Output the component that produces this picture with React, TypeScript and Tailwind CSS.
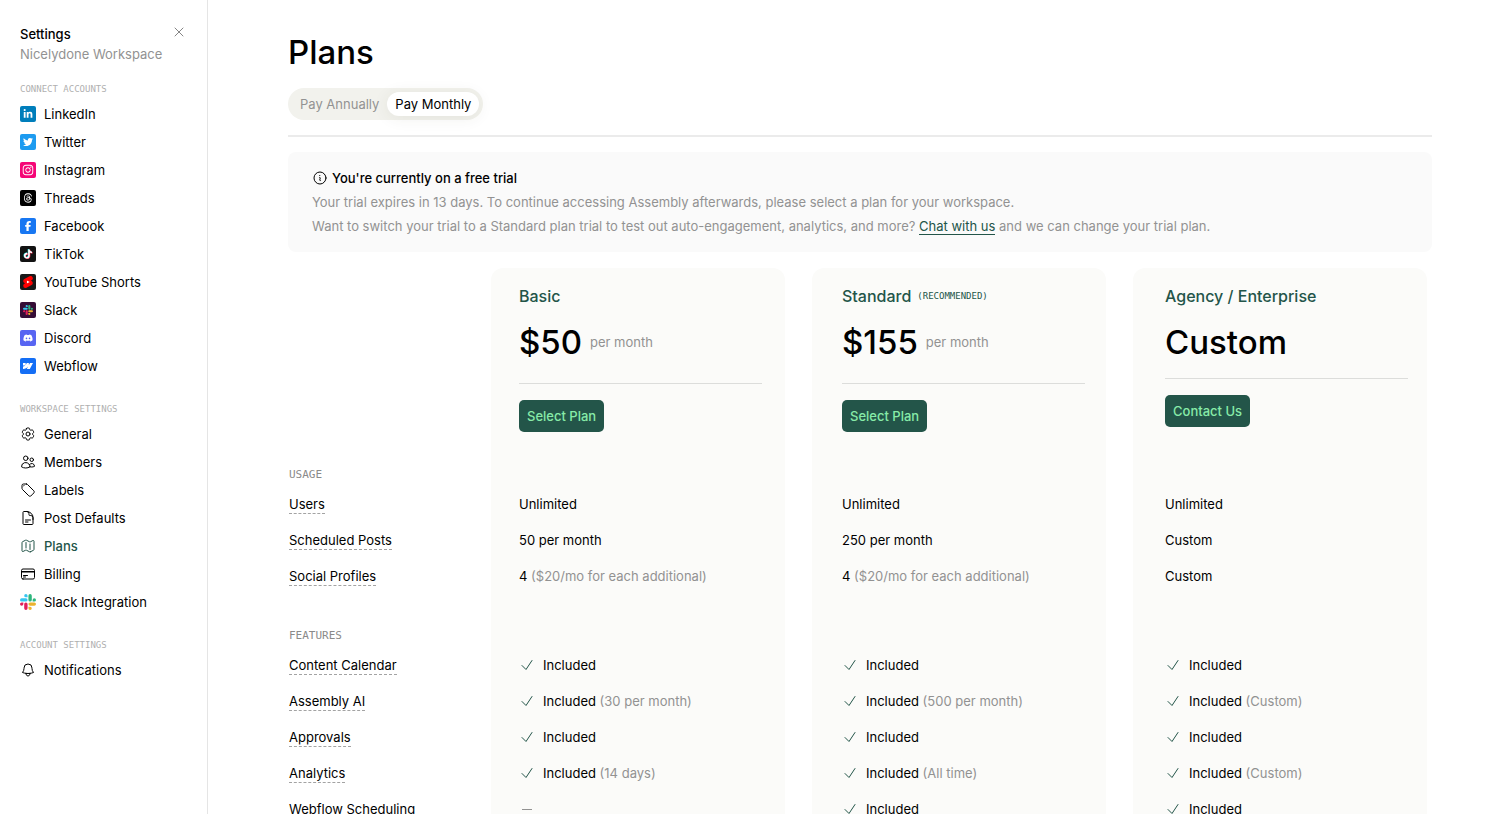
import { useState, type ReactNode } from "react";
import clsx from "clsx";
import {
  FaDiscord,
  FaFacebookF,
  FaInstagram,
  FaLinkedinIn,
  FaThreads,
  FaTwitter,
} from "react-icons/fa6";
import { SiWebflow } from "react-icons/si";
import {
  HiOutlineBell,
  HiOutlineCheck,
  HiOutlineCog6Tooth,
  HiOutlineCreditCard,
  HiOutlineDocumentText,
  HiOutlineInformationCircle,
  HiOutlineMap,
  HiOutlineTag,
  HiOutlineUsers,
  HiOutlineXMark,
} from "react-icons/hi2";

const SlackLogo = ({ className }: { className: string }) => (
  <svg viewBox="0 0 24 24" className={className}>
    <path
      fill="#E01E5A"
      d="M5.042 15.165a2.528 2.528 0 0 1-2.52 2.523A2.528 2.528 0 0 1 0 15.165a2.527 2.527 0 0 1 2.522-2.52h2.52v2.52zM6.313 15.165a2.527 2.527 0 0 1 2.521-2.52 2.527 2.527 0 0 1 2.521 2.52v6.313A2.528 2.528 0 0 1 8.834 24a2.528 2.528 0 0 1-2.521-2.522v-6.313z"
    />
    <path
      fill="#36C5F0"
      d="M8.834 5.042a2.528 2.528 0 0 1-2.521-2.52A2.528 2.528 0 0 1 8.834 0a2.528 2.528 0 0 1 2.521 2.522v2.52H8.834zM8.834 6.313a2.528 2.528 0 0 1 2.521 2.521 2.528 2.528 0 0 1-2.521 2.521H2.522A2.528 2.528 0 0 1 0 8.834a2.528 2.528 0 0 1 2.522-2.521h6.312z"
    />
    <path
      fill="#2EB67D"
      d="M18.956 8.834a2.528 2.528 0 0 1 2.522-2.521A2.528 2.528 0 0 1 24 8.834a2.528 2.528 0 0 1-2.522 2.521h-2.522V8.834zM17.688 8.834a2.528 2.528 0 0 1-2.523 2.521 2.527 2.527 0 0 1-2.52-2.521V2.522A2.527 2.527 0 0 1 15.165 0a2.528 2.528 0 0 1 2.523 2.522v6.312z"
    />
    <path
      fill="#ECB22E"
      d="M15.165 18.956a2.528 2.528 0 0 1 2.523 2.522A2.528 2.528 0 0 1 15.165 24a2.527 2.527 0 0 1-2.52-2.522v-2.522h2.52zM15.165 17.688a2.527 2.527 0 0 1-2.52-2.523 2.526 2.526 0 0 1 2.52-2.52h6.313A2.527 2.527 0 0 1 24 15.165a2.528 2.528 0 0 1-2.522 2.523h-6.313z"
    />
  </svg>
);

const TIKTOK_NOTE =
  "M12.525.02c1.31-.02 2.61-.01 3.91-.02.08 1.53.63 3.09 1.75 4.17 1.12 1.11 2.7 1.62 4.24 1.79v4.03c-1.44-.05-2.89-.35-4.2-.97-.57-.26-1.1-.59-1.62-.93-.01 2.92.01 5.84-.02 8.75-.08 1.4-.54 2.79-1.35 3.94-1.31 1.92-3.58 3.17-5.91 3.21-1.43.08-2.86-.31-4.08-1.03-2.02-1.19-3.44-3.37-3.65-5.71-.02-.5-.03-1-.01-1.49.18-1.9 1.12-3.72 2.58-4.96 1.66-1.44 3.98-2.13 6.15-1.72.02 1.48-.04 2.96-.04 4.44-.99-.32-2.15-.23-3.02.37-.63.41-1.11 1.04-1.36 1.75-.21.51-.15 1.07-.14 1.61.24 1.64 1.82 3.02 3.5 2.87 1.12-.01 2.19-.66 2.77-1.61.19-.33.4-.67.41-1.06.1-1.79.06-3.57.07-5.36.01-4.03-.01-8.05.02-12.07z";

const TikTokLogo = () => (
  <svg viewBox="-1 -1 26 26" className="size-2.5">
    <path fill="#25F4EE" d={TIKTOK_NOTE} transform="translate(-1.2 -1)" />
    <path fill="#FE2C55" d={TIKTOK_NOTE} transform="translate(1.4 1)" />
    <path fill="#fff" d={TIKTOK_NOTE} />
  </svg>
);

const ShortsLogo = () => (
  <svg viewBox="0 0 24 24" className="size-3">
    <path fill="#fff" d="M9 8h7v8H9z" />
    <path
      fill="#FF0000"
      d="m18.931 9.99-1.441-.601 1.717-.913a4.48 4.48 0 0 0 1.874-6.078 4.506 4.506 0 0 0-6.09-1.874L4.792 5.929a4.504 4.504 0 0 0-2.402 4.193 4.521 4.521 0 0 0 2.666 3.904c.036.012 1.442.6 1.442.6l-1.706.901a4.51 4.51 0 0 0-2.369 3.967A4.528 4.528 0 0 0 6.93 24c.725 0 1.437-.174 2.08-.508l10.21-5.406a4.494 4.494 0 0 0 2.39-4.192 4.525 4.525 0 0 0-2.678-3.904ZM9.597 15.19V8.824l6.007 3.184z"
    />
  </svg>
);

const Badge = ({ color, children }: { color: string; children: ReactNode }) => (
  <span
    className={clsx(
      "flex size-4 shrink-0 items-center justify-center rounded-xs text-white",
      color
    )}
  >
    {children}
  </span>
);

type NavItem = { label: string; icon: ReactNode; active?: boolean };

const navGroups: { title: string; items: NavItem[] }[] = [
  {
    title: "CONNECT ACCOUNTS",
    items: [
      {
        label: "LinkedIn",
        icon: (
          <Badge color="bg-[#007ebb]">
            <FaLinkedinIn className="size-2.5" />
          </Badge>
        ),
      },
      {
        label: "Twitter",
        icon: (
          <Badge color="bg-[#1d9bf0]">
            <FaTwitter className="size-2.5" />
          </Badge>
        ),
      },
      {
        label: "Instagram",
        icon: (
          <Badge color="bg-[#f50676]">
            <FaInstagram className="size-3" />
          </Badge>
        ),
      },
      {
        label: "Threads",
        icon: (
          <Badge color="bg-black">
            <FaThreads className="size-2.5" />
          </Badge>
        ),
      },
      {
        label: "Facebook",
        icon: (
          <Badge color="bg-[#1877f2]">
            <FaFacebookF className="size-2.5" />
          </Badge>
        ),
      },
      {
        label: "TikTok",
        icon: (
          <Badge color="bg-[#121212]">
            <TikTokLogo />
          </Badge>
        ),
      },
      {
        label: "YouTube Shorts",
        icon: (
          <Badge color="bg-[#181818]">
            <ShortsLogo />
          </Badge>
        ),
      },
      {
        label: "Slack",
        icon: (
          <Badge color="bg-[#350d36]">
            <SlackLogo className="size-2.5" />
          </Badge>
        ),
      },
      {
        label: "Discord",
        icon: (
          <Badge color="bg-[#5865f2]">
            <FaDiscord className="size-2.5" />
          </Badge>
        ),
      },
      {
        label: "Webflow",
        icon: (
          <Badge color="bg-[#146ef5]">
            <SiWebflow className="size-2.5" />
          </Badge>
        ),
      },
    ],
  },
  {
    title: "WORKSPACE SETTINGS",
    items: [
      { label: "General", icon: <HiOutlineCog6Tooth className="size-4" /> },
      { label: "Members", icon: <HiOutlineUsers className="size-4" /> },
      { label: "Labels", icon: <HiOutlineTag className="size-4" /> },
      {
        label: "Post Defaults",
        icon: <HiOutlineDocumentText className="size-4" />,
      },
      {
        label: "Plans",
        icon: <HiOutlineMap className="size-4" />,
        active: true,
      },
      { label: "Billing", icon: <HiOutlineCreditCard className="size-4" /> },
      { label: "Slack Integration", icon: <SlackLogo className="size-4" /> },
    ],
  },
  {
    title: "ACCOUNT SETTINGS",
    items: [
      { label: "Notifications", icon: <HiOutlineBell className="size-4" /> },
    ],
  },
];

const plans = [
  { name: "Basic", price: "$50", period: "per month", action: "Select Plan" },
  {
    name: "Standard",
    tag: "(RECOMMENDED)",
    price: "$155",
    period: "per month",
    action: "Select Plan",
  },
  { name: "Agency / Enterprise", price: "Custom", action: "Contact Us" },
];

type Value = { text?: string; note?: string; included?: boolean };

const included = (note?: string): Value => ({
  included: true,
  text: "Included",
  note,
});

const sections: { title: string; rows: { label: string; values: Value[] }[] }[] =
  [
    {
      title: "USAGE",
      rows: [
        {
          label: "Users",
          values: [
            { text: "Unlimited" },
            { text: "Unlimited" },
            { text: "Unlimited" },
          ],
        },
        {
          label: "Scheduled Posts",
          values: [
            { text: "50 per month" },
            { text: "250 per month" },
            { text: "Custom" },
          ],
        },
        {
          label: "Social Profiles",
          values: [
            { text: "4", note: "($20/mo for each additional)" },
            { text: "4", note: "($20/mo for each additional)" },
            { text: "Custom" },
          ],
        },
      ],
    },
    {
      title: "FEATURES",
      rows: [
        {
          label: "Content Calendar",
          values: [included(), included(), included()],
        },
        {
          label: "Assembly AI",
          values: [
            included("(30 per month)"),
            included("(500 per month)"),
            included("(Custom)"),
          ],
        },
        { label: "Approvals", values: [included(), included(), included()] },
        {
          label: "Analytics",
          values: [
            included("(14 days)"),
            included("(All time)"),
            included("(Custom)"),
          ],
        },
        {
          label: "Webflow Scheduling",
          values: [{}, included(), included()],
        },
      ],
    },
  ];

const Sidebar = () => (
  <aside className="w-52 shrink-0 border-r border-[#e5e5e5] px-5 pt-6">
    <div className="flex items-start justify-between">
      <div>
        <p className="font-medium">Settings</p>
        <p className="whitespace-nowrap text-[#929292]">Nicelydone Workspace</p>
      </div>
      <button aria-label="Close settings" className="text-[#858585]">
        <HiOutlineXMark className="size-4" />
      </button>
    </div>
    <nav className="mt-4 flex flex-col gap-5">
      {navGroups.map((group) => (
        <div key={group.title}>
          <p className="pt-px font-['DejaVu_Sans_Mono',monospace] text-[9px] leading-4 text-[#b0b0b0]">
            {group.title}
          </p>
          <ul className="mt-[3px]">
            {group.items.map((item) => (
              <li key={item.label}>
                <a
                  href="#"
                  className={clsx(
                    "flex h-7 items-center gap-2",
                    item.active && "font-medium text-[#235549]"
                  )}
                >
                  {item.icon}
                  {item.label}
                </a>
              </li>
            ))}
          </ul>
        </div>
      ))}
    </nav>
  </aside>
);

const CellValue = ({ value }: { value: Value }) => {
  if (!value.text) {
    return <span className="ml-[3px] block h-px w-2.5 bg-[#929292]" />;
  }
  return (
    <span className="flex items-center">
      {value.included && (
        <HiOutlineCheck className="mr-2 size-4 shrink-0 text-[#235549]" />
      )}
      <span>
        {value.text}{" "}
        {value.note && <span className="text-[#929292]">{value.note}</span>}
      </span>
    </span>
  );
};

const PlansTable = () => (
  <div className="mt-4 grid">
    {/* column cards sit behind the table */}
    <div className="col-start-1 row-start-1 mr-[5px] ml-[203px] grid grid-cols-3 gap-[27px]">
      {plans.map((plan) => (
        <div key={plan.name} className="rounded-xl bg-[#fbfbf9]" />
      ))}
    </div>
    <table className="col-start-1 row-start-1 w-full table-fixed text-left">
      <thead>
        <tr className="align-top">
          <td className="w-[175px]" />
          {plans.map((plan) => (
            <th key={plan.name} className="pt-4 pr-6 pb-px pl-14 font-normal">
              <p className="flex items-center gap-1.5 text-base leading-6 font-medium text-[#235549]">
                {plan.name}
                {plan.tag && (
                  <span className="font-['DejaVu_Sans_Mono',monospace] text-[9px] font-normal">
                    {plan.tag}
                  </span>
                )}
              </p>
              <div
                className={clsx(
                  "mt-3 flex items-center gap-2 border-b border-[#dcdddb]",
                  plan.period ? "pb-[19px]" : "pb-3.5"
                )}
              >
                <span className="text-[33px] leading-11 font-medium">
                  {plan.price}
                </span>
                {plan.period && (
                  <span className="text-[#929292]">{plan.period}</span>
                )}
              </div>
              <button className="mt-4 block h-8 rounded-[5px] bg-[#235549] px-2 font-medium text-[#87eba8]">
                {plan.action}
              </button>
            </th>
          ))}
        </tr>
      </thead>
      {sections.map((section) => (
        <tbody key={section.title}>
          <tr>
            <th
              colSpan={4}
              className="h-[53px] pb-0.5 pl-px align-bottom font-['DejaVu_Sans_Mono',monospace] text-[11px] leading-[18px] font-normal text-[#8a8a8a]"
            >
              {section.title}
            </th>
          </tr>
          {section.rows.map((row) => (
            <tr key={row.label} className="h-9">
              <th className="pl-px font-normal whitespace-nowrap">
                <span className="border-b border-dashed border-[#a3a3a3] pb-px">
                  {row.label}
                </span>
              </th>
              {row.values.map((value, index) => (
                <td key={index} className="pr-6 pl-14">
                  <CellValue value={value} />
                </td>
              ))}
            </tr>
          ))}
        </tbody>
      ))}
    </table>
  </div>
);

const App = () => {
  const [period, setPeriod] = useState("Pay Monthly");

  return (
    <div className="flex h-screen bg-white font-[Inter,sans-serif] text-[13px] leading-5 text-black">
      <Sidebar />
      <main className="min-w-0 grow overflow-y-auto px-20 pt-7 [scrollbar-width:none]">
        <h1 className="text-[33px] leading-12 font-medium">Plans</h1>
        <div className="mt-3 flex w-fit rounded-full bg-[#f2f2ed] p-1">
          {["Pay Annually", "Pay Monthly"].map((option) => (
            <button
              key={option}
              onClick={() => setPeriod(option)}
              className={clsx(
                "h-6 rounded-full px-2",
                option === period
                  ? "bg-white shadow-[0_2px_16px_rgba(60,60,40,0.08)]"
                  : "text-[#929292]"
              )}
            >
              {option}
            </button>
          ))}
        </div>
        <hr className="mt-[15px] border-t-2 border-[#ebebeb]" />
        <section className="mt-[15px] rounded-lg bg-[#fafafa] px-6 py-3.5 leading-6 text-[#929292]">
          <h2 className="flex items-center gap-1 font-medium text-black">
            <HiOutlineInformationCircle className="size-4" />
            You're currently on a free trial
          </h2>
          <p>
            Your trial expires in 13 days. To continue accessing Assembly
            afterwards, please select a plan for your workspace.
          </p>
          <p>
            Want to switch your trial to a Standard plan trial to test out
            auto-engagement, analytics, and more?{" "}
            <a href="#" className="border-b border-[#235549] text-[#235549]">
              Chat with us
            </a>{" "}
            and we can change your trial plan.
          </p>
        </section>
        <PlansTable />
      </main>
    </div>
  );
};

export default App;
